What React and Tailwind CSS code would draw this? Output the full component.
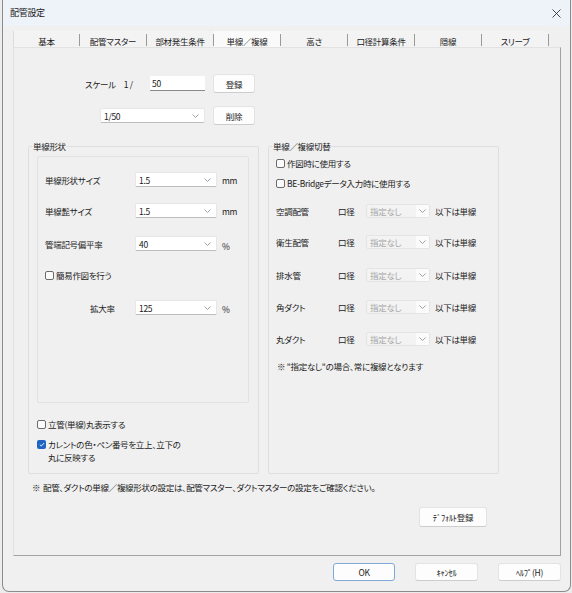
import React from 'react';

const TABS = ['基本', '配管マスター', '部材発生条件', '単線／複線', '高さ', '口径計算条件', '隠線', 'スリーブ'];

const PIPE_ROWS = [
  { label: '空調配管', mt: 'mt-[15px]' },
  { label: '衛生配管', mt: 'mt-[17px]' },
  { label: '排水管', mt: 'mt-[19px]' },
  { label: '角ダクト', mt: 'mt-[18px]' },
  { label: '丸ダクト', mt: 'mt-[18px]' },
];

const Chevron = () => (
  <svg width="7" height="4" viewBox="0 0 7 4" className="text-[#8a8a8a]">
    <path d="M0.5 0.5 L3.5 3.5 L6.5 0.5" fill="none" stroke="currentColor" strokeWidth="0.8" />
  </svg>
);

// combo box, Windows 11 look
const Combo = ({ value, className }) => (
  <div
    className={`flex items-center justify-between pl-[3px] pr-[5px] bg-white border border-[#e6e6e6] border-b-[#bdbdbd] rounded-[2px] ${className}`}
  >
    <span>{value}</span>
    <Chevron />
  </div>
);

const DisabledCombo = () => (
  <div className="flex items-stretch w-[64px] h-[14px] border border-[#e4e4e4] rounded-[2px] bg-[#f3f3f3] text-[#a6a6a6]">
    <span className="flex-1 flex items-center pl-[3px]">指定なし</span>
    <span className="w-[13px] flex items-center justify-center bg-[#fbfbfb]">
      <Chevron />
    </span>
  </div>
);

const Btn = ({ children, className }) => (
  <button
    className={`flex items-center justify-center bg-[#fdfdfd] border border-[#e3e3e3] border-b-[#cdcdcd] rounded-[3px] text-[#1b1b1b] ${className}`}
  >
    {children}
  </button>
);

const Check = ({ checked }) =>
  checked ? (
    <span className="w-[9px] h-[9px] shrink-0 rounded-[2px] bg-[#1e63c4] flex items-center justify-center">
      <svg width="6" height="5" viewBox="0 0 6 5">
        <path d="M0.8 2.6 L2.3 4 L5.2 1" fill="none" stroke="white" strokeWidth="0.9" />
      </svg>
    </span>
  ) : (
    <span className="w-[9px] h-[9px] shrink-0 rounded-[2px] border border-[#6b6b6b] bg-[#fbfbfb]" />
  );

const CheckRow = ({ checked, children, className = '' }) => (
  <div className={`flex items-center gap-[2px] h-[12px] ${className}`}>
    <Check checked={checked} />
    <span>{children}</span>
  </div>
);

export default function App() {
  return (
    <div className="w-[572px] h-[593px] bg-[#ececec] pl-[2px] pr-[1px] pb-[1px] font-['Noto_Sans_CJK_JP',sans-serif] [font-feature-settings:'palt'] text-[8.5px] tracking-[-0.3px] leading-[12px] text-[#1b1b1b]">
      <div className="w-full h-full flex flex-col bg-[#f0f0f0] border-x border-b border-[#8c8c8c] rounded-b-[7px]">
        {/* title bar */}
        <div className="h-[26px] shrink-0 flex items-center justify-between pl-[7px] pr-[9px] bg-[#eef2f9]">
          <span className="text-[9px]">配管設定</span>
          <svg width="9" height="9" viewBox="0 0 9 9">
            <path d="M0.5 0.5 L8.5 8.5 M8.5 0.5 L0.5 8.5" stroke="#333" strokeWidth="0.9" />
          </svg>
        </div>

        {/* tabs */}
        <div className="mt-[5px] ml-[10px] flex h-[16px]">
          {TABS.map((t, i) => (
            <div
              key={t}
              className={`w-[67px] flex items-center ${i === 3 ? 'bg-[#fafafa]' : 'bg-[#f3f3f3]'} ${i === 0 ? 'border-l border-[#dcdcdc]' : ''}`}
            >
              <span className="flex-1 text-center pt-[3px]">{t}</span>
              <span className="w-px h-[12px] self-end mb-[1px] bg-[#9a9a9a]" />
            </div>
          ))}
        </div>

        {/* tab panel */}
        <div className="ml-[10px] w-[548px] h-[509px] shrink-0 flex flex-col border-t border-l border-[#e2e2e2] border-r-[#a2a2a2] border-b-[#a2a2a2] border-r border-b">
          {/* scale */}
          <div className="mt-[26px] pl-[71px] flex items-center">
            <div className="w-[65px] flex">
              <span>スケール</span>
              <span className="ml-[8px]">1 /</span>
            </div>
            <div className="w-[55px] h-[15px] pl-[2px] flex items-center bg-white border-b border-[#8a8a8a]">50</div>
            <Btn className="ml-[8px] w-[42px] h-[19px]">登録</Btn>
          </div>
          <div className="mt-[13px] pl-[86px] flex items-center">
            <Combo value="1/50" className="w-[105px] h-[15px]" />
            <Btn className="ml-[8px] w-[42px] h-[19px]">削除</Btn>
          </div>

          {/* group boxes */}
          <div className="mt-[15px] ml-[14px] flex gap-[9px]">
            <fieldset className="w-[231px] h-[334px] border border-[#dedede] rounded-[2px]">
              <legend className="ml-[3px] px-[1px]">単線形状</legend>
              <div className="ml-[8px] mt-[4px] w-[212px] h-[247px] border border-[#e2e2e2] rounded-[2px] flex flex-col">
                <div className="mt-[15px] pl-[7px] flex items-center">
                  <span className="w-[90px]">単線形状サイズ</span>
                  <Combo value="1.5" className="w-[82px] h-[15px]" />
                  <span className="ml-[5px]">mm</span>
                </div>
                <div className="mt-[16px] pl-[7px] flex items-center">
                  <span className="w-[90px]">単線髭サイズ</span>
                  <Combo value="1.5" className="w-[82px] h-[15px]" />
                  <span className="ml-[5px]">mm</span>
                </div>
                <div className="mt-[17px] pl-[7px] flex items-center">
                  <span className="w-[90px]">管端記号偏平率</span>
                  <Combo value="40" className="w-[82px] h-[15px]" />
                  <span className="ml-[5px] mt-[5px]">%</span>
                </div>
                <CheckRow className="mt-[17px] pl-[7px]">簡易作図を行う</CheckRow>
                <div className="mt-[19px] pl-[52px] flex items-center">
                  <span className="w-[45px]">拡大率</span>
                  <Combo value="125" className="w-[82px] h-[15px]" />
                  <span className="ml-[5px] mt-[2px]">%</span>
                </div>
              </div>
              <CheckRow className="mt-[15px] ml-[8px]">立管(単線)丸表示する</CheckRow>
              <div className="mt-[8px] ml-[8px] flex items-start gap-[2px] leading-[12.5px]">
                <span className="mt-[2px]">
                  <Check checked />
                </span>
                <span>
                  カレントの色・ペン番号を立上、立下の
                  <br />
                  丸に反映する
                </span>
              </div>
            </fieldset>

            <fieldset className="w-[231px] h-[334px] border border-[#dedede] rounded-[2px]">
              <legend className="ml-[3px] px-[1px]">単線／複線切替</legend>
              <CheckRow className="mt-[5px] pl-[7px]">作図時に使用する</CheckRow>
              <CheckRow className="mt-[8px] pl-[7px]">BE-Bridgeデータ入力時に使用する</CheckRow>
              {PIPE_ROWS.map((r) => (
                <div key={r.label} className={`${r.mt} pl-[7px] flex items-center`}>
                  <span className="w-[62px]">{r.label}</span>
                  <span className="w-[28px]">口径</span>
                  <DisabledCombo />
                  <span className="ml-[5px]">以下は単線</span>
                </div>
              ))}
              <div className="mt-[14px] pl-[8px]">※ "指定なし"の場合、常に複線となります</div>
            </fieldset>
          </div>

          <div className="mt-[7px] pl-[18px] flex">
            <span className="w-[11px]">※</span>
            <span>配管、ダクトの単線／複線形状の設定は、配管マスター、ダクトマスターの設定をご確認ください。</span>
          </div>

          <div className="mt-[14px] flex justify-end pr-[73px]">
            <Btn className="w-[68px] h-[20px]">ﾃﾞﾌｫﾙﾄ登録</Btn>
          </div>
        </div>

        {/* dialog buttons */}
        <div className="mt-[7px] flex justify-end gap-[20px] pr-[9px]">
          <Btn className="w-[62px] h-[18px] !border-[#7fa9d6]">OK</Btn>
          <Btn className="w-[63px] h-[18px]">ｷｬﾝｾﾙ</Btn>
          <Btn className="w-[63px] h-[18px]">ﾍﾙﾌﾟ(H)</Btn>
        </div>
      </div>
    </div>
  );
}
